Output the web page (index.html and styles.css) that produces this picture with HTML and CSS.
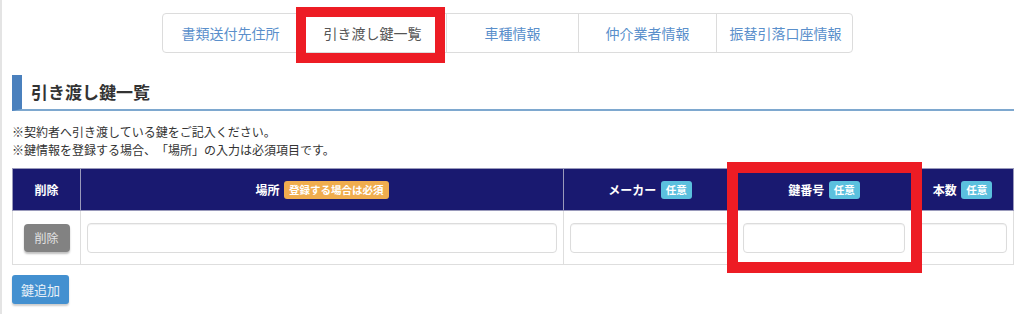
FILE: index.html
```html
<!DOCTYPE html>
<html lang="ja">
<head>
  <meta charset="utf-8" />
  <title>引き渡し鍵一覧</title>
  <link rel="stylesheet" href="styles.css">
</head>
<body>
  <div class="page">
    <nav class="tabs">
      <a class="tab tab-1" href="#">書類送付先住所</a>
      <a class="tab tab-2 active" href="#">引き渡し鍵一覧</a>
      <a class="tab tab-3" href="#">車種情報</a>
      <a class="tab tab-4" href="#">仲介業者情報</a>
      <a class="tab tab-5" href="#">振替引落口座情報</a>
    </nav>

    <section class="section">
      <h2 class="section-title">引き渡し鍵一覧</h2>
      <p class="notes">※契約者へ引き渡している鍵をご記入ください。<br>※鍵情報を登録する場合、「場所」の入力は必須項目です。</p>

      <table class="key-table">
        <colgroup>
          <col class="c-del"><col class="c-place"><col class="c-maker"><col class="c-no"><col class="c-count">
        </colgroup>
        <thead>
          <tr>
            <th>削除</th>
            <th>場所 <span class="badge badge-req">登録する場合は必須</span></th>
            <th>メーカー <span class="badge badge-opt">任意</span></th>
            <th>鍵番号 <span class="badge badge-opt">任意</span></th>
            <th>本数 <span class="badge badge-opt">任意</span></th>
          </tr>
        </thead>
        <tbody>
          <tr>
            <td class="cell-del"><button type="button" class="btn-del">削除</button></td>
            <td><input type="text" class="field"></td>
            <td><input type="text" class="field"></td>
            <td><input type="text" class="field"></td>
            <td><input type="text" class="field"></td>
          </tr>
        </tbody>
      </table>

      <button type="button" class="btn-add">鍵追加</button>
    </section>

    <!-- 注目枠 -->
    <div class="mark mark-tab"></div>
    <div class="mark mark-col"></div>
  </div>
</body>
</html>
```

FILE: styles.css
```css
*{box-sizing:border-box;font-family:"Noto Sans CJK JP","Noto Sans",sans-serif;text-spacing-trim:space-all;}
body{margin:0;background:#fff;color:#333;}
.page{position:relative;height:314px;border-left:2px solid #e4e4e4;padding:13px 10px 0 10px;overflow:hidden;}

/* タブ */
.tabs{display:grid;grid-template-columns:135px 148px 132px 138px 138px;width:691px;height:40px;margin-left:150px;border:1px solid #dcdcdc;border-radius:4px;background:#fff;}
.tab{display:flex;align-items:center;justify-content:center;font-size:14px;color:#5a8fcb;text-decoration:none;border-left:1px solid #dcdcdc;}
.tab-1{border-left:none;}
.tab.active{color:#555;}

/* 見出し */
.section-title{margin:22px 0 0 0;height:36px;padding-left:9px;border-left:10px solid #4a80bd;border-bottom:2px solid #7ea8cf;font-size:17px;font-weight:bold;line-height:34px;color:#333;}
.notes{margin:12px 0 0 0;font-size:12px;line-height:18px;color:#333;}

/* テーブル */
.key-table{margin-top:9px;width:1001px;border-collapse:collapse;table-layout:fixed;}
.c-del{width:68px}
.c-place{width:483px}
.c-maker{width:173px}
.c-no{width:175px}
.c-count{width:102px}
.key-table th{height:42px;background:#191970;color:#fff;font-size:12px;font-weight:bold;text-align:center;border:1px solid #9a9abb;padding:0;}
.key-table td{height:54px;border:1px solid #dedede;padding:0 6px 0 6px;vertical-align:middle;}
.key-table td.cell-del{text-align:center;}
.badge{display:inline-block;vertical-align:1px;margin-left:2px;padding:0 5px;height:18px;line-height:18px;border-radius:3px;font-size:10.5px;font-weight:bold;color:#fff;}
.badge-req{background:#f0ad4e;}
.badge-opt{background:#5bc0de;}

.field{display:block;width:100%;height:30px;border:1px solid #dcdcdc;border-radius:4px;box-shadow:inset 0 1px 1px rgba(0,0,0,.06);background:#fff;}

.btn-del{width:46px;height:28px;border:none;border-radius:4px;background:#828282;color:#e2e2e2;font-size:12px;box-shadow:0 2px 2px rgba(0,0,0,.25);padding:0;cursor:pointer;}
.btn-add{display:block;margin-top:10px;width:57px;height:29px;border:none;border-radius:3px;background:#4390d0;color:#e8f0f8;font-size:13px;box-shadow:0 2px 2px rgba(0,0,0,.2);padding:0;cursor:pointer;}

/* 赤枠 */
.mark{position:absolute;border:10px solid #ed1c24;}
.mark-tab{left:294px;top:7px;width:149px;height:56px;}
.mark-col{left:725px;top:162px;width:195px;height:111px;border-width:11px;}
```
